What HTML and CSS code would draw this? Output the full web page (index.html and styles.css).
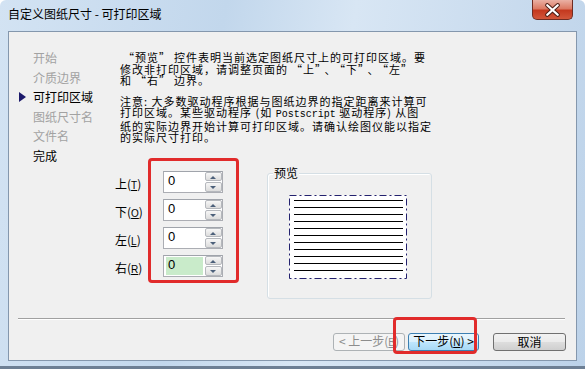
FILE: index.html
```html
<!DOCTYPE html>
<html lang="zh-CN">
<head>
    <meta charset="UTF-8">
    <title>自定义图纸尺寸 - 可打印区域</title>
    <link rel="stylesheet" href="styles.css">
</head>
<body>
    <div class="window">
        <div class="titlebar">
            <span class="title">自定义图纸尺寸 - 可打印区域</span>
            <button class="close" title="关闭">
                <svg width="41" height="20" viewBox="0 0 41 20">
                    <path d="M15 5 L26 15 M26 5 L15 15" stroke="#4a1c14" stroke-width="4.5" stroke-linecap="round"/>
                    <path d="M15 5 L26 15 M26 5 L15 15" stroke="#ffffff" stroke-width="2.4" stroke-linecap="round"/>
                </svg>
            </button>
        </div>

        <div class="client">
            <div class="content">
                <ul class="steps">
                    <li class="step">开始</li>
                    <li class="step">介质边界</li>
                    <li class="step current">可打印区域</li>
                    <li class="step">图纸尺寸名</li>
                    <li class="step">文件名</li>
                    <li class="step active">完成</li>
                </ul>

                <div class="main">
                    <p class="note"><span class="qo">“</span>预览<span class="qc">”</span>控件表明当前选定图纸尺寸上的可打印区域。要<br>修改非打印区域，请调整页面的<span class="qo">“</span>上<span class="qc">”</span>、<span class="qo">“</span>下<span class="qc">”</span>、<span class="qo">“</span>左<span class="qc">”</span><br>和<span class="qo">“</span>右<span class="qc">”</span>边界。</p>
                    <p class="note second">注意: 大多数驱动程序根据与图纸边界的指定距离来计算可<br>打印区域。某些驱动程序 (如 <span class="latin">Postscript</span> 驱动程序) 从图<br>纸的实际边界开始计算可打印区域。请确认绘图仪能以指定<br>的实际尺寸打印。</p>

                    <div class="controls">
                        <div class="margins">
                            <div class="margin-row">
                                <label class="margin-label">上(<u>T</u>)</label>
                                <div class="spin"><span class="spin-value">0</span><span class="spin-buttons"><i class="up"></i><i class="down"></i></span></div>
                            </div>
                            <div class="margin-row">
                                <label class="margin-label">下(<u>O</u>)</label>
                                <div class="spin"><span class="spin-value">0</span><span class="spin-buttons"><i class="up"></i><i class="down"></i></span></div>
                            </div>
                            <div class="margin-row">
                                <label class="margin-label">左(<u>L</u>)</label>
                                <div class="spin"><span class="spin-value">0</span><span class="spin-buttons"><i class="up"></i><i class="down"></i></span></div>
                            </div>
                            <div class="margin-row">
                                <label class="margin-label">右(<u>R</u>)</label>
                                <div class="spin"><span class="spin-value selected">0</span><span class="spin-buttons"><i class="up"></i><i class="down"></i></span></div>
                            </div>
                        </div>

                        <div class="groupbox">
                            <span class="groupbox-title">预览</span>
                            <svg class="paper" width="118" height="84" viewBox="0 0 118 84">
                                <rect x="0.5" y="0.5" width="117" height="83" fill="#ffffff" stroke="#23216e" stroke-dasharray="7 3 2 3"/>
                                <g stroke="#000000" stroke-width="1">
                                    <line x1="5" y1="5.5" x2="114" y2="5.5"/>
                                    <line x1="5" y1="12.5" x2="114" y2="12.5"/>
                                    <line x1="5" y1="19.5" x2="114" y2="19.5"/>
                                    <line x1="5" y1="26.5" x2="114" y2="26.5"/>
                                    <line x1="5" y1="33.5" x2="114" y2="33.5"/>
                                    <line x1="5" y1="40.5" x2="114" y2="40.5"/>
                                    <line x1="5" y1="47.5" x2="114" y2="47.5"/>
                                    <line x1="5" y1="54.5" x2="114" y2="54.5"/>
                                    <line x1="5" y1="61.5" x2="114" y2="61.5"/>
                                    <line x1="5" y1="68.5" x2="114" y2="68.5"/>
                                    <line x1="5" y1="75.5" x2="114" y2="75.5"/>
                                </g>
                            </svg>
                        </div>
                    </div>
                </div>
            </div>

            <div class="footer">
                <div class="separator"></div>
                <div class="buttons">
                    <button class="btn" disabled>&lt; 上一步(<u>B</u>)</button>
                    <button class="btn default">下一步(<u>N</u>) &gt;</button>
                    <button class="btn cancel">取消</button>
                </div>
            </div>

            <!-- red annotation boxes -->
            <div class="mark mark-margins"></div>
            <div class="mark mark-next"></div>
        </div>
    </div>
</body>
</html>
```

FILE: styles.css
```css
* {
    box-sizing: border-box;
}

body {
    margin: 0;
    width: 585px;
    height: 369px;
    overflow: hidden;
    font-family: "Noto Sans CJK SC", "Noto Sans", sans-serif;
    font-size: 12px;
    color: #000;
}

/* WINDOW FRAME */
.window {
    width: 585px;
    height: 369px;
    display: flex;
    flex-direction: column;
    padding: 0 8px 8px;
    border-radius: 6px 6px 0 0;
    background: linear-gradient(100deg, #d3e3f3 0%, #c2d7ec 35%, #d8e6f4 55%, #bcd2e9 100%);
    box-shadow: inset 0 -3px 0 #6d7f94;
}

.titlebar {
    height: 31px;
    display: flex;
    align-items: flex-start;
}

.title {
    padding-top: 7px;
    line-height: 14px;
    font-size: 12px;
}

.close {
    margin-left: auto;
    margin-right: 4px;
    width: 41px;
    height: 20px;
    padding: 0;
    border: 1px solid #6f2c22;
    border-top: none;
    border-radius: 0 0 5px 5px;
    background: linear-gradient(#eab1a4 0%, #dc7a64 45%, #c4391f 55%, #d2563a 100%);
    display: flex;
}

/* CLIENT AREA */
.client {
    flex: 1;
    position: relative;
    background: #f0f0f0;
    border: 1px solid #8497ad;
    display: flex;
    flex-direction: column;
}

.content {
    height: 286px;
    display: flex;
}

.steps {
    list-style: none;
    margin: 0;
    padding: 16px 0 0 0;
    width: 111px;
}

.step {
    position: relative;
    height: 19.6px;
    line-height: 19.6px;
    padding-left: 24px;
    color: #a2a2a2;
}

.step.current,
.step.active {
    color: #000;
}

.step.current::before {
    content: "";
    position: absolute;
    left: 10px;
    top: 5px;
    border-left: 7px solid #1c1a6b;
    border-top: 5px solid transparent;
    border-bottom: 5px solid transparent;
}

.main {
    padding-top: 20px;
}

.note {
    margin: 0;
    font-size: 11px;
    letter-spacing: 1px;
    line-height: 11.5px;
    white-space: nowrap;
}

.note.second {
    margin-top: 9px;
}

/* wide quote marks, as in the dialog's font */
.qo {
    padding-left: 3px;
}

.qc {
    padding-right: 3px;
}

.latin {
    font-family: "Liberation Mono", monospace;
    font-size: 10px;
    letter-spacing: 0;
}

/* SPINNERS + PREVIEW */
.controls {
    display: flex;
    align-items: flex-start;
    gap: 44px;
    margin-top: 23px;
    margin-left: -5px;
}

.margins {
    padding-top: 4px;
    display: flex;
    flex-direction: column;
    gap: 6px;
}

.margin-row {
    display: flex;
    align-items: center;
}

.margin-label {
    width: 48px;
    padding-top: 3px;
}

.margin-label u {
    font-family: "Liberation Sans", sans-serif;
    font-size: 10px;
}

.spin {
    width: 60px;
    height: 22px;
    display: flex;
    background: #fff;
    border: 1px solid #abadb3;
    border-top-color: #a0a4ab;
}

.spin-value {
    flex: 1;
    margin: 1px 2px 1px 2px;
    padding: 1px 0 0 2px;
    font-family: "Liberation Sans", sans-serif;
    font-size: 13px;
    line-height: 14px;
}

.spin-value.selected {
    background: #c9ebca;
}

.spin-buttons {
    width: 17px;
    display: flex;
    flex-direction: column;
    gap: 1px;
}

.spin-buttons i {
    flex: 1;
    position: relative;
    border: 1px solid #b5b8bd;
    border-radius: 2px;
    background: linear-gradient(#f7f7f7, #dcdcdc);
}

.spin-buttons i::after {
    content: "";
    position: absolute;
    left: 4px;
    top: 3px;
    border-left: 3px solid transparent;
    border-right: 3px solid transparent;
}

.spin-buttons .up::after {
    border-bottom: 3px solid #4c607a;
}

.spin-buttons .down::after {
    border-top: 3px solid #4c607a;
}

.groupbox {
    position: relative;
    margin-top: 6px;
    width: 165px;
    height: 126px;
    padding: 21px 0 0 21px;
    border: 1px solid #d5dfe5;
    border-radius: 3px;
    box-shadow: inset 1px 1px 0 #fff;
}

.groupbox-title {
    position: absolute;
    left: 5px;
    top: -8px;
    padding: 0 1px;
    line-height: 14px;
    background: #f0f0f0;
}

.paper {
    display: block;
}

/* FOOTER */
.footer {
    display: flex;
    flex-direction: column;
}

.separator {
    margin: 0 11px 0 9px;
    height: 2px;
    border-top: 1px solid #a0a0a0;
    border-bottom: 1px solid #ffffff;
}

.buttons {
    display: flex;
    justify-content: flex-end;
    gap: 3px;
    margin-top: 13px;
    padding-right: 10px;
}

.btn {
    height: 18px;
    width: 72px;
    padding: 0;
    font-family: "Noto Sans CJK SC", "Noto Sans", sans-serif;
    font-size: 12px;
    line-height: 14px;
    color: #000;
    border: 1px solid #707070;
    border-radius: 3px;
    background: linear-gradient(#f2f2f2 0%, #ebebeb 48%, #dddddd 52%, #cfcfcf 100%);
}

.btn u {
    font-family: "Liberation Sans", sans-serif;
    font-size: 10px;
}

.btn:disabled {
    color: #8d8d8d;
    border-color: #adb2b5;
    background: #f4f4f4;
}

.btn.default {
    width: 71px;
    border-color: #3c7fb1;
    background: linear-gradient(#eaf6fd 0%, #d9f0fc 48%, #bee6fd 52%, #a7d9f5 100%);
}

.btn.cancel {
    width: 73px;
    margin-left: 11px;
}

/* RED ANNOTATIONS */
.mark {
    position: absolute;
    border: 3px solid #e12b2b;
    border-radius: 4px;
}

.mark-margins {
    left: 139px;
    top: 126px;
    width: 91px;
    height: 125px;
}

.mark-next {
    left: 384px;
    top: 285px;
    width: 84px;
    height: 37px;
}
```
